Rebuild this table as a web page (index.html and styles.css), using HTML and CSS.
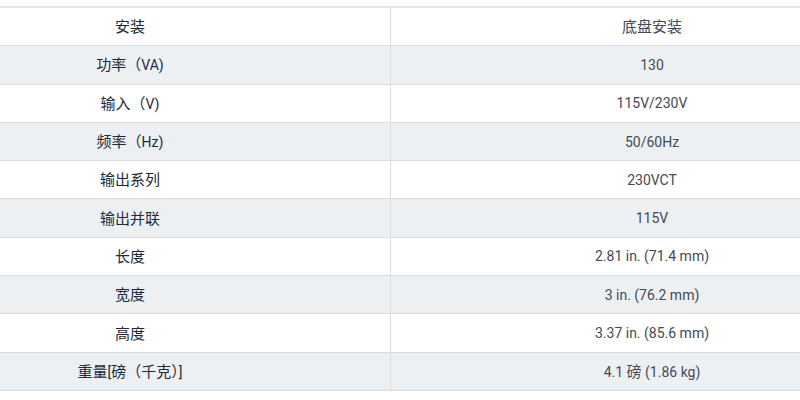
FILE: index.html
```html
<!DOCTYPE html>
<html lang="zh">
<head>
<meta charset="utf-8">
<link rel="stylesheet" href="styles.css">
</head>
<body>
<div class="wrap">
<table class="spec">
<tbody>
<tr><td class="k"><span class="cn">安装</span></td><td class="v"><span class="cn">底盘安装</span></td></tr>
<tr class="alt"><td class="k"><span class="cn">功率（</span>VA)</td><td class="v">130</td></tr>
<tr><td class="k"><span class="cn">输入（</span>V)</td><td class="v">115V/230V</td></tr>
<tr class="alt"><td class="k"><span class="cn">频率（</span>Hz)</td><td class="v">50/60Hz</td></tr>
<tr><td class="k"><span class="cn">输出系列</span></td><td class="v">230VCT</td></tr>
<tr class="alt"><td class="k"><span class="cn">输出并联</span></td><td class="v">115V</td></tr>
<tr><td class="k"><span class="cn">长度</span></td><td class="v">2.81 in. (71.4 mm)</td></tr>
<tr class="alt"><td class="k"><span class="cn">宽度</span></td><td class="v">3 in. (76.2 mm)</td></tr>
<tr><td class="k"><span class="cn">高度</span></td><td class="v">3.37 in. (85.6 mm)</td></tr>
<tr class="alt"><td class="k"><span class="cn">重量</span>[<span class="cn">磅（千克）</span>]</td><td class="v">4.1 <span class="cn">磅</span> (1.86 kg)</td></tr>
</tbody>
</table>
</div>
</body>
</html>
```
FILE: styles.css
```css
html, body {
  margin: 0;
  padding: 0;
  background: #ffffff;
  overflow: hidden;
}
.wrap {
  padding-top: 6px;
  margin-left: -130px;
  width: 1043px;
}
.spec {
  width: 1043px;
  border-collapse: collapse;
  table-layout: fixed;
  border-top: 2px solid #e6e6e6;
  font-family: Roboto, "Noto Sans CJK SC", sans-serif;
  font-size: 14px;
}
.cn {
  font-family: "Noto Sans CJK SC", sans-serif;
  font-size: 15px;
}
.spec td {
  height: 37.3px;
  padding: 0;
  text-align: center;
  vertical-align: middle;
  border-bottom: 1px solid #dcdcdc;
  line-height: 20px;
}
.spec td.k {
  width: 520px;
  color: #1e2a3a;
  border-right: 1px solid #dcdcdc;
}
.spec td.v {
  color: #444a52;
}
.spec tr.alt td {
  background: #edf0f3;
}
```
